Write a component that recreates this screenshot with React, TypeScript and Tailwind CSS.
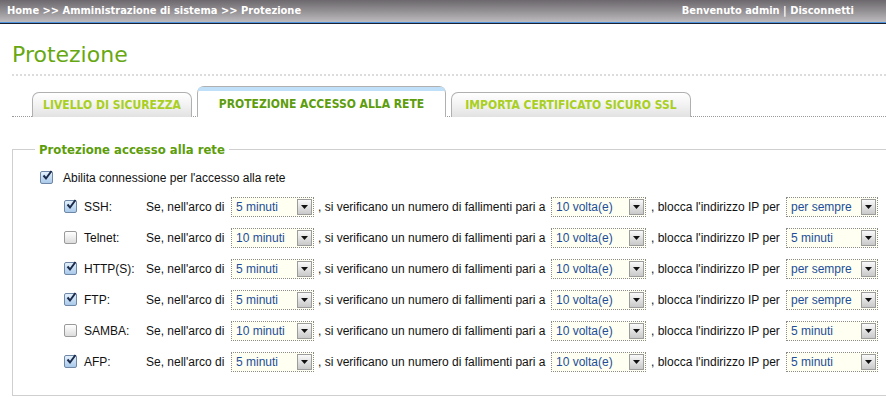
import React from 'react'

type Row = { name: string; on: boolean; arco: string; volte: string; blocca: string }

const rows: Row[] = [
  { name: 'SSH:', on: true, arco: '5 minuti', volte: '10 volta(e)', blocca: 'per sempre' },
  { name: 'Telnet:', on: false, arco: '10 minuti', volte: '10 volta(e)', blocca: '5 minuti' },
  { name: 'HTTP(S):', on: true, arco: '5 minuti', volte: '10 volta(e)', blocca: 'per sempre' },
  { name: 'FTP:', on: true, arco: '5 minuti', volte: '10 volta(e)', blocca: 'per sempre' },
  { name: 'SAMBA:', on: false, arco: '10 minuti', volte: '10 volta(e)', blocca: '5 minuti' },
  { name: 'AFP:', on: true, arco: '5 minuti', volte: '10 volta(e)', blocca: '5 minuti' },
]

function Check({ on }: { on: boolean }) {
  return (
    <span
      className={
        'relative flex h-[13px] w-[13px] shrink-0 items-center justify-center rounded-[2px] border ' +
        (on
          ? 'border-[#6f87a6] bg-gradient-to-b from-[#e4f0fb] to-[#a9c9ea]'
          : 'border-[#9a9a9a] bg-gradient-to-b from-[#ffffff] to-[#dcdcdc]')
      }
    >
      {on && (
        <svg width="11" height="11" viewBox="0 0 11 11" className="absolute -top-[2px] left-[1px]">
          <path d="M1.5 5.5 L4 8.5 L9.5 1" fill="none" stroke="#1b2b4b" strokeWidth="2" />
        </svg>
      )}
    </span>
  )
}

function Select({ value, w }: { value: string; w: string }) {
  return (
    <span className={'flex h-[20px] shrink-0 items-center border border-dotted border-[#8a8a8a] bg-[#fffff2] ' + w}>
      <span className="flex-1 pl-[4px] text-[12px] text-[#1d4e98]">{value}</span>
      <span className="mr-[1px] flex h-[16px] w-[15px] items-center justify-center border border-[#9c9c9c] bg-gradient-to-b from-[#fafafa] to-[#c9c9c9]">
        <svg width="7" height="4" viewBox="0 0 7 4">
          <path d="M0 0 H7 L3.5 4 Z" fill="#111" />
        </svg>
      </span>
    </span>
  )
}

export default function App() {
  return (
    <div className="h-[397px] w-[886px] overflow-hidden bg-white font-['Liberation_Sans',Arial,sans-serif]">
      <div className="flex h-[22px] items-center justify-between bg-gradient-to-b from-[#6c686d] to-[#bdbbbe] px-[7px] font-['DejaVu_Sans_Condensed','DejaVu_Sans',sans-serif] text-[11px] font-bold text-white">
        <span>Home &gt;&gt; Amministrazione di sistema &gt;&gt; Protezione</span>
        <span className="mr-[25px]">Benvenuto admin | Disconnetti</span>
      </div>
      <div className="h-[1px] bg-[#4f93dc]" />
      <div className="h-[1px] bg-[#1d2233]" />

      <div className="pl-[12px]">
        <h1 className="pt-[17px] font-['DejaVu_Sans',sans-serif] text-[22px] leading-[28px] text-[#67a812]">Protezione</h1>
        <div className="mt-[5px] border-t-2 border-dotted border-[#dcdcdc]" />

        <div className="mt-[10px] flex items-end gap-[5px] border-b border-dotted border-[#9a9a9a] pl-[20px] font-['DejaVu_Sans_Condensed','DejaVu_Sans',sans-serif] text-[12px] font-bold">
          <div className="-mb-[1px] flex h-[25px] w-[160px] items-center justify-center rounded-t-[7px] border border-b-0 border-[#b0b0b0] bg-gradient-to-b from-[#ffffff] via-[#f2f2f2] to-[#e2e2e2] text-[#a9cf22]">
            LIVELLO DI SICUREZZA
          </div>
          <div className="-mb-[1px] flex h-[31px] w-[249px] flex-col rounded-t-[7px] border border-b-0 border-[#b0b0b0] bg-white">
            <div className="h-[4px] rounded-t-[6px] bg-[#bfe0f8]" />
            <div className="flex flex-1 items-center justify-center text-[#5d9d0c]">PROTEZIONE ACCESSO ALLA RETE</div>
          </div>
          <div className="-mb-[1px] flex h-[25px] w-[240px] items-center justify-center rounded-t-[7px] border border-b-0 border-[#b0b0b0] bg-gradient-to-b from-[#ffffff] via-[#f2f2f2] to-[#e2e2e2] text-[#a9cf22]">
            IMPORTA CERTIFICATO SICURO SSL
          </div>
        </div>

        <fieldset className="mt-[23px] w-[900px] border border-[#cfcfcf] pb-[23px]">
          <legend className="ml-[22px] px-[4px] font-['DejaVu_Sans_Condensed','DejaVu_Sans',sans-serif] text-[13px] font-bold text-[#5d9d0c]">
            Protezione accesso alla rete
          </legend>
          <div className="mt-[9px] flex items-center gap-[10px] pl-[27px] text-[12px] text-[#111]">
            <Check on />
            <span>Abilita connessione per l&apos;accesso alla rete</span>
          </div>
          <div className="mt-[10px] flex flex-col gap-[11px] pl-[51px] text-[12px] text-[#111]">
            {rows.map((r) => (
              <div key={r.name} className="flex h-[20px] items-center">
                <Check on={r.on} />
                <span className="ml-[7px] w-[62px]">{r.name}</span>
                <span className="w-[85px]">Se, nell&apos;arco di</span>
                <Select value={r.arco} w="w-[83px]" />
                <span className="ml-[4px] w-[233px]">, si verificano un numero di fallimenti pari a</span>
                <Select value={r.volte} w="w-[95px]" />
                <span className="ml-[5px] w-[135px]">, blocca l&apos;indirizzo IP per</span>
                <Select value={r.blocca} w="w-[92px]" />
              </div>
            ))}
          </div>
        </fieldset>
      </div>
    </div>
  )
}
